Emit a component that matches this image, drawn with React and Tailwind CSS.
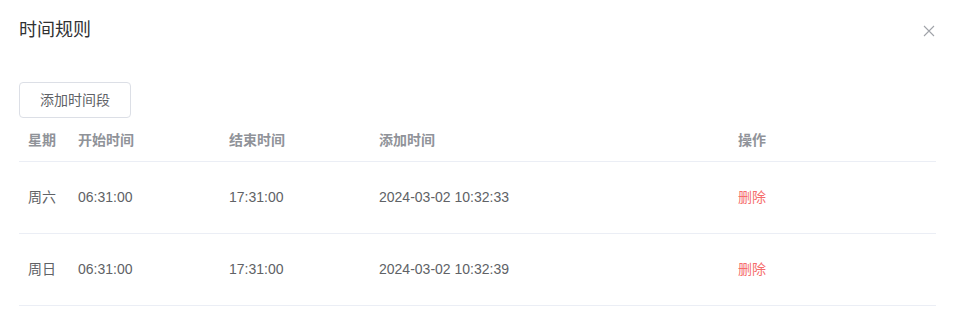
import React from "react";

const rows = [
  { day: "周六", start: "06:31:00", end: "17:31:00", added: "2024-03-02 10:32:33" },
  { day: "周日", start: "06:31:00", end: "17:31:00", added: "2024-03-02 10:32:39" },
];

export default function App() {
  return (
    <div
      className="w-[953px] h-[335px] bg-white relative"
      style={{ fontFamily: '"Liberation Sans", "Noto Sans CJK SC", sans-serif' }}
    >
      <div className="px-[19px] pt-[20px]">
        <div className="flex items-center justify-between h-[20px]">
          <span className="text-[18px] leading-[20px] text-[#303133]">时间规则</span>
          <button className="-mr-[1px] mt-[2px]" aria-label="close">
            <svg width="12" height="12" viewBox="0 0 12 12" fill="none">
              <path d="M1 1L11 11M11 1L1 11" stroke="#a0a3a9" strokeWidth="1.1" />
            </svg>
          </button>
        </div>
        <div className="mt-[42px]">
          <button className="h-[36px] px-[20px] border border-[#DCDFE6] rounded-[4px] text-[14px] text-[#606266] bg-white">
            添加时间段
          </button>
        </div>
        <div className="w-[917px] text-[14px]">
          <div className="flex h-[44px] items-center border-b border-[#EBEEF5] font-bold text-[#909399]">
            <div className="w-[50px] pl-[9px] pt-[2px]">星期</div>
            <div className="w-[150px] pl-[9px] pt-[2px]">开始时间</div>
            <div className="w-[150px] pl-[10px] pt-[2px]">结束时间</div>
            <div className="w-[359px] pl-[10px] pt-[2px]">添加时间</div>
            <div className="flex-1 pl-[10px] pt-[2px]">操作</div>
          </div>
          {rows.map((r) => (
            <div key={r.day} className="flex h-[72px] items-center border-b border-[#EBEEF5] text-[#606266]">
              <div className="w-[50px] pl-[9px]">{r.day}</div>
              <div className="w-[150px] pl-[9px]">{r.start}</div>
              <div className="w-[150px] pl-[10px]">{r.end}</div>
              <div className="w-[359px] pl-[10px]">{r.added}</div>
              <div className="flex-1 pl-[10px] text-[14px] text-[#F56C6C]">删除</div>
            </div>
          ))}
        </div>
      </div>
    </div>
  );
}
